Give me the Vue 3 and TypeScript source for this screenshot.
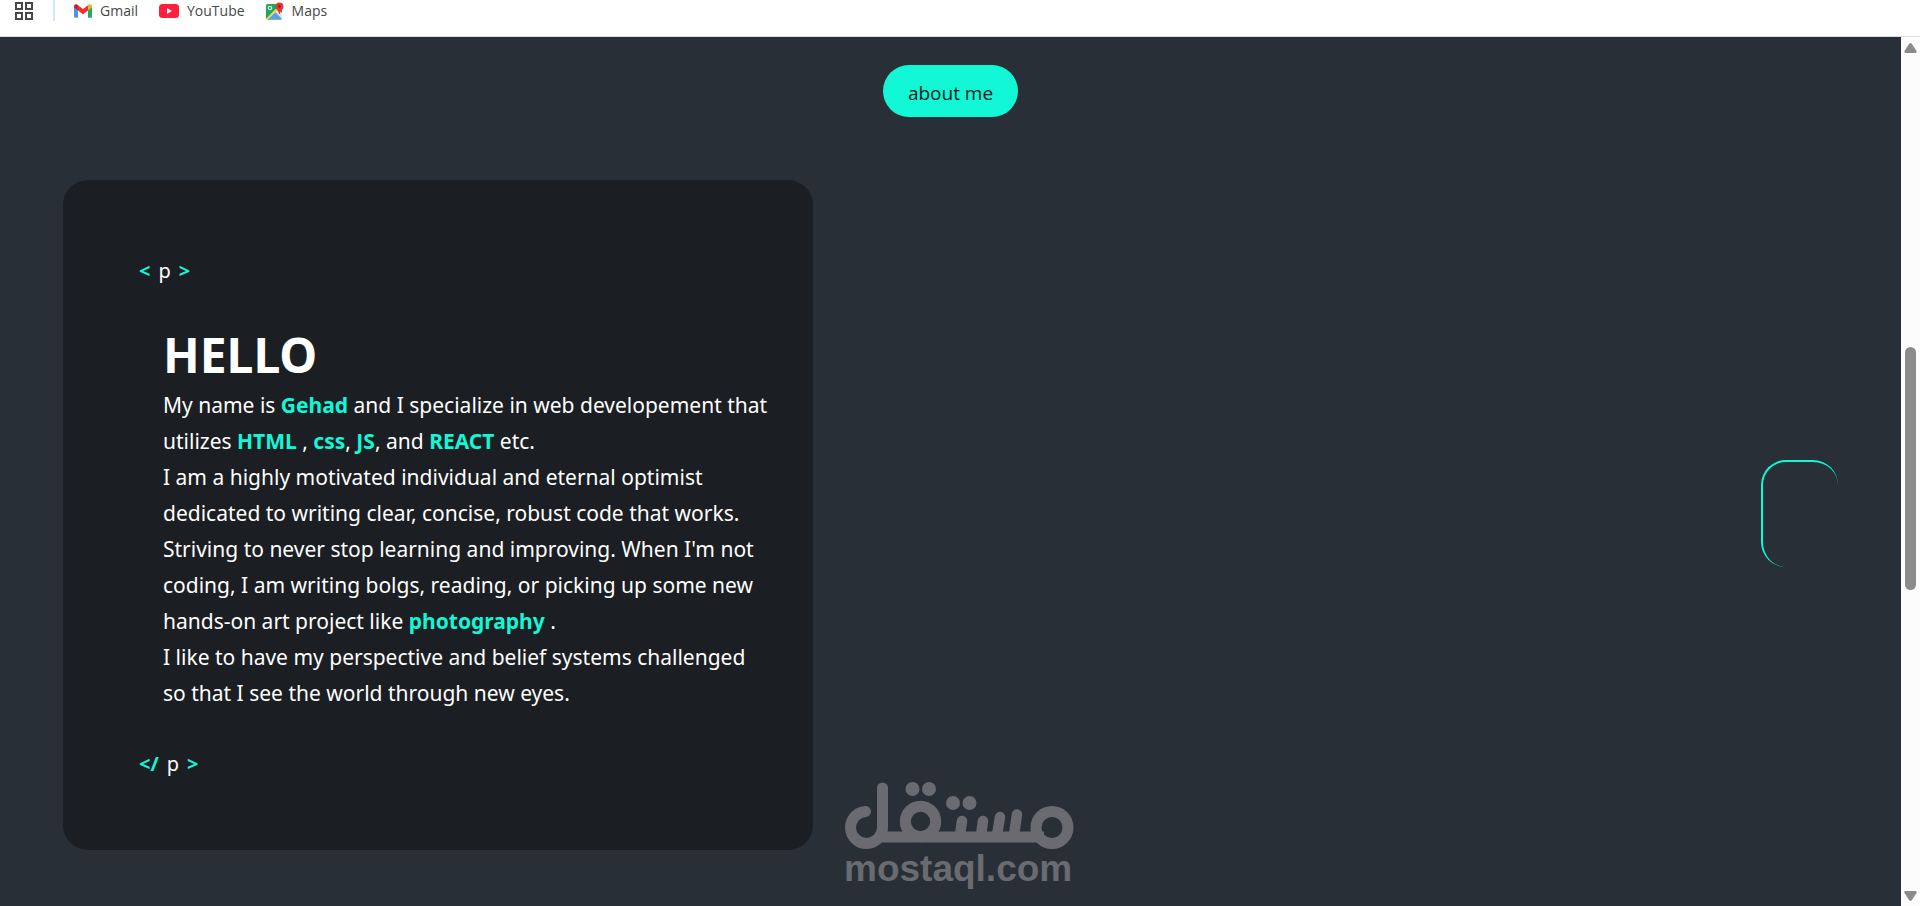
<script setup lang="ts">
interface Bookmark {
  id: 'gmail' | 'youtube' | 'maps'
  label: string
}

const bookmarks: Bookmark[] = [
  { id: 'gmail', label: 'Gmail' },
  { id: 'youtube', label: 'YouTube' },
  { id: 'maps', label: 'Maps' },
]
</script>

<template>
  <div class="window">
    <nav class="bookmarks" aria-label="Bookmarks">
      <button class="apps" type="button" aria-label="Apps">
        <svg width="18" height="18" viewBox="0 0 18 18" fill="none" stroke="#474747" stroke-width="2">
          <rect x="1" y="1" width="6" height="6" />
          <rect x="11" y="1" width="6" height="6" />
          <rect x="1" y="11" width="6" height="6" />
          <rect x="11" y="11" width="6" height="6" />
        </svg>
      </button>
      <span class="divider"></span>
      <a v-for="item in bookmarks" :key="item.id" class="bookmark" href="#">
        <svg v-if="item.id === 'gmail'" width="18" height="14" viewBox="0 0 18 14">
          <path d="M0 3v9.500a1.300 1.300 0 0 0 1.300 1.300H4V6z" fill="#4f93e6" />
          <path d="M18 3v9.500a1.300 1.300 0 0 1-1.300 1.300H14V6z" fill="#20ad58" />
          <path d="M4 1.200 9 5l5-3.800v5.300L9 10.300 4 6.500z" fill="#f22f2f" />
          <path d="M0 2.200C0 .2 2.300-.6 4 1v5.500L0 3.600z" fill="#c3202f" />
          <path d="M18 2.200C18 .2 15.700-.6 14 1v5.500l4-2.900z" fill="#e6b32c" />
        </svg>
        <svg v-else-if="item.id === 'youtube'" width="20" height="14" viewBox="0 0 20 14">
          <rect width="20" height="14" rx="3.500" fill="#ff1f3d" />
          <path d="M8 4l5 3-5 3z" fill="#fff" />
        </svg>
        <svg v-else width="18" height="18" viewBox="0 0 18 18">
          <rect y="2" width="16" height="15.500" rx="1.500" fill="#20a861" />
          <path d="M1.200 17.300 9 9.200l7 7.300q-.4 1-1.500 1H2z" fill="#5d9ee8" />
          <path d="M8 8.800 16 17V11l-3.500-3.500z" fill="#dfe3e8" />
          <path d="M.3 16.500 13 3.500l1.700 1.700L2 17.500H1z" fill="#f5d65c" />
          <circle cx="4" cy="6" r="1.700" fill="none" stroke="#d5f0df" stroke-width="1.200" />
          <path d="M13.500.4a4 4 0 0 1 4 4c0 2.900-3.200 3.800-3.600 7.600h-.8c-.4-3.800-3.600-4.700-3.600-7.600a4 4 0 0 1 4-4z" fill="#e8372f" />
          <circle cx="13.500" cy="4.300" r="1.400" fill="#8e1d1c" />
        </svg>
        <span>{{ item.label }}</span>
      </a>
    </nav>

    <div class="viewport">
      <main class="page">
        <button class="pill" type="button">about me</button>
        <div class="row">
          <section class="card">
            <p class="tag"><b>&lt;</b><span>p</span><b>&gt;</b></p>
            <div class="content">
              <h1>HELLO</h1>
              <p>
                My name is <b>Gehad</b> and I specialize in web developement that utilizes
                <b>HTML</b> , <b>css</b>, <b>JS</b>, and <b>REACT</b> etc.
              </p>
              <p>
                I am a highly motivated individual and eternal optimist dedicated to writing clear,
                concise, robust code that works. Striving to never stop learning and improving. When
                I'm not coding, I am writing bolgs, reading, or picking up some new hands-on art
                project like <b>photography</b> .
              </p>
              <p>
                I like to have my perspective and belief systems challenged so that I see the world
                through new eyes.
              </p>
            </div>
            <p class="tag"><b>&lt;/</b><span>p</span><b>&gt;</b></p>
          </section>
          <div class="frame"></div>
        </div>
      </main>

      <div class="scrollbar" aria-hidden="true">
        <svg width="13" height="10" viewBox="0 0 13 10">
          <path d="M5.200.8q1.300-1.400 2.600 0L12.500 8q.6 1.800-1 2h-10q-1.600-.2-1-2z" fill="#8b8b8b" />
        </svg>
        <div class="track"><div class="thumb"></div></div>
        <svg width="13" height="10" viewBox="0 0 13 10">
          <path d="M5.200 9.200q1.300 1.400 2.600 0L12.500 2q.6-1.800-1-2h-10q-1.600.2-1 2z" fill="#8b8b8b" />
        </svg>
      </div>
    </div>

    <div class="watermark">
      <svg width="230" height="68" viewBox="0 0 230 68" fill="none" stroke="#696b70" stroke-width="11" role="img" aria-label="مستقل">
        <path d="M21.500 29.500A16 16 0 1 0 38.500 45.500V6" stroke-linecap="round" stroke-linejoin="round" />
        <path d="M33 55H200" />
        <circle cx="76.500" cy="39.500" r="15.200" />
        <circle cx="208" cy="45.500" r="16" />
        <path d="M118 39l-2 14M139 39l-2 14M156 35l-3 18M173 32.500l-3 20" stroke-width="10.500" stroke-linecap="round" />
        <g fill="#696b70" stroke="none">
          <circle cx="68.500" cy="7" r="7" />
          <circle cx="85" cy="7" r="7" />
          <circle cx="109" cy="21" r="7" />
          <circle cx="125.500" cy="21" r="7" />
        </g>
      </svg>
      <span>mostaql.com</span>
    </div>
  </div>
</template>

<style>
body {
  margin: 0;
}
</style>

<style scoped>
.window {
  position: relative;
  display: flex;
  flex-direction: column;
  min-height: 100vh;
  overflow: hidden;
  color: #fff;
  background: #282f37;
  font-family: 'Segoe UI', 'Noto Sans', 'Open Sans', sans-serif;
}
.bookmarks {
  box-sizing: border-box;
  display: flex;
  align-items: flex-start;
  height: 37px;
  padding: 0 15px;
  border-bottom: 1px solid #dcdcdc;
  background: #fff;
  font-family: 'Segoe UI', 'Open Sans', sans-serif;
}
.apps {
  display: flex;
  padding: 2px 0 0;
  border: 0;
  background: none;
}
.divider {
  width: 2px;
  height: 21px;
  margin: 0 19px 0 20px;
  background: #d3e3fd;
}
.bookmark {
  display: flex;
  align-items: center;
  gap: 8px;
  height: 21px;
  margin-right: 21px;
  color: #474747;
  font-size: 14px;
  text-decoration: none;
}
.viewport {
  display: flex;
  flex: 1;
}
.page {
  display: flex;
  flex: 1;
  flex-direction: column;
  align-items: center;
  padding: 28px 63px 56px;
}
.pill {
  height: 52px;
  padding: 4px 25px 0;
  border: 0;
  border-radius: 26px;
  color: #10201f;
  background: #12f7d6;
  font-family: 'Segoe UI', 'Open Sans', sans-serif;
  font-size: 19px;
}
.row {
  display: flex;
  align-items: center;
  justify-content: space-between;
  align-self: stretch;
  margin-top: 63px;
}
.card {
  box-sizing: border-box;
  width: 750px;
  padding: 76px 42px 71px 76px;
  border-radius: 25px;
  background: #1b1e22;
}
.card b {
  color: #12f7d6;
}
.card p,
.card h1 {
  margin: 0;
}
.card .tag {
  display: flex;
  gap: 8px;
  font-size: 20px;
  line-height: 30px;
}
.content {
  margin: 39px 0 38px 24px;
  font-size: 21px;
  line-height: 36px;
}
.content h1 {
  margin-bottom: 2px;
  font-size: 48px;
  line-height: 60px;
}
.frame {
  box-sizing: border-box;
  width: 77px;
  height: 107px;
  margin-bottom: 4px;
  border-top: 2px solid #12f7d6;
  border-left: 2px solid #12f7d6;
  border-radius: 25px;
}
.scrollbar {
  box-sizing: border-box;
  display: flex;
  flex-direction: column;
  align-items: center;
  width: 19px;
  padding: 6px 0 5px;
  background: #fcfcfc;
}
.track {
  display: grid;
  flex: 1;
  grid-template-rows: 294fr 243fr 301fr;
}
.thumb {
  grid-row: 2;
  width: 11px;
  border-radius: 6px;
  background: #8b8b8b;
}
.watermark {
  position: absolute;
  bottom: 18px;
  left: 50%;
  display: flex;
  flex-direction: column;
  margin-left: -116px;
  color: #696b70;
  font: bold 37px/38px 'Liberation Sans', Arial, sans-serif;
}
</style>
